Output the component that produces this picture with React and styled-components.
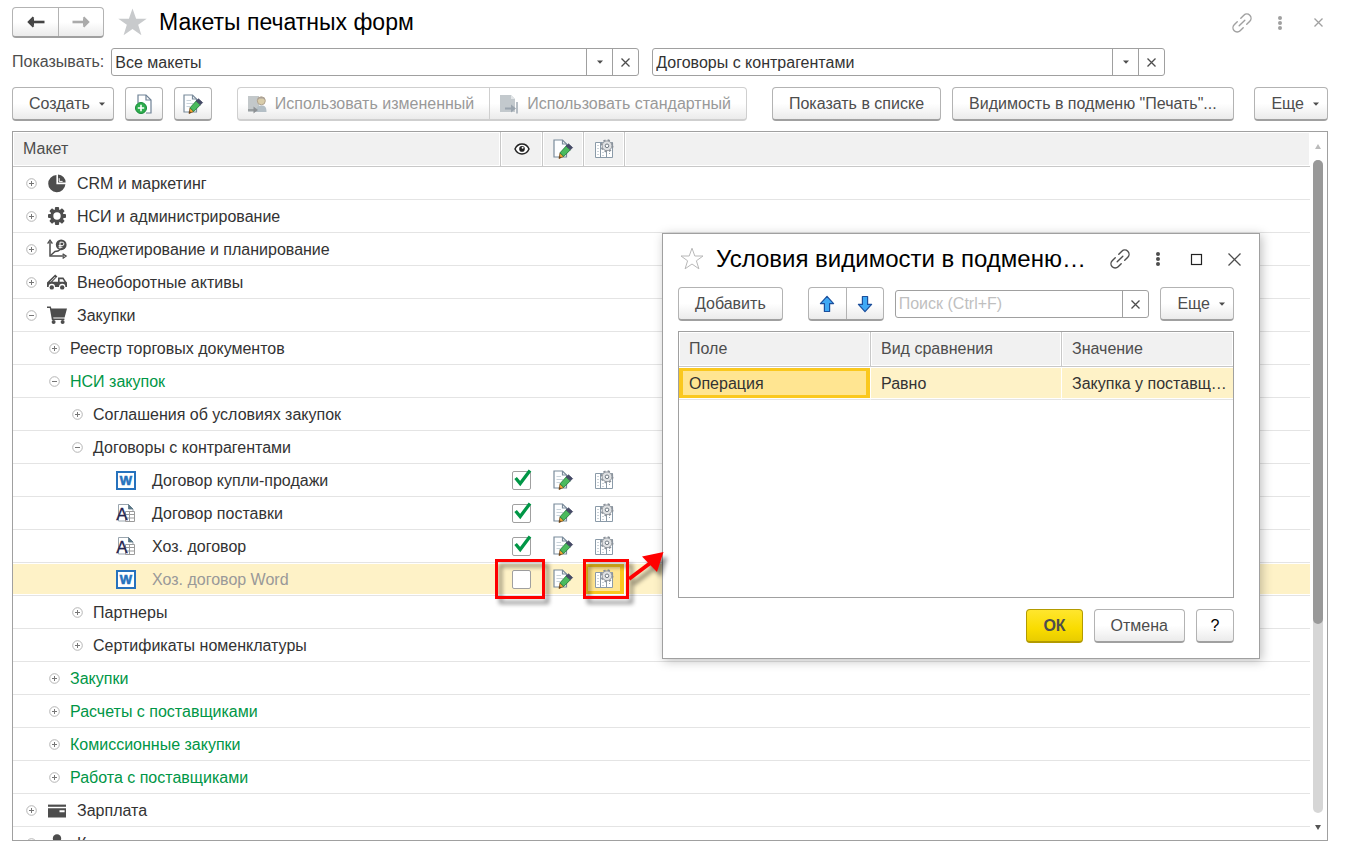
import React, { useState } from 'react';
import styled, { createGlobalStyle, css } from 'styled-components';

const colors = {
  text: '#333',
  muted: '#4d4d4d',
  disabled: '#999',
  border: '#a0a0a0',
  line: '#e4e4e4',
  header: '#f1f1f1',
  selected: '#fef2c7',
  current: '#ffe591',
  currentBorder: '#fac81e',
  green: '#009646',
  mark: '#ff0000',
};

const rows = [
  { id: 1, level: 0, toggle: '+', icon: 'pie', text: 'CRM и маркетинг' },
  { id: 2, level: 0, toggle: '+', icon: 'gear', text: 'НСИ и администрирование' },
  { id: 3, level: 0, toggle: '+', icon: 'budget', text: 'Бюджетирование и планирование' },
  { id: 4, level: 0, toggle: '+', icon: 'truck', text: 'Внеоборотные активы' },
  { id: 5, level: 0, toggle: '-', icon: 'cart', text: 'Закупки' },
  { id: 6, level: 1, toggle: '+', text: 'Реестр торговых документов' },
  { id: 7, level: 1, toggle: '-', text: 'НСИ закупок', green: true },
  { id: 8, level: 2, toggle: '+', text: 'Соглашения об условиях закупок' },
  { id: 9, level: 2, toggle: '-', text: 'Договоры с контрагентами' },
  { id: 10, level: 3, leaf: true, icon: 'word', text: 'Договор купли-продажи', visible: true },
  { id: 11, level: 3, leaf: true, icon: 'layout', text: 'Договор поставки', visible: true },
  { id: 12, level: 3, leaf: true, icon: 'layout', text: 'Хоз. договор', visible: true },
  { id: 13, level: 3, leaf: true, icon: 'word', text: 'Хоз. договор Word', visible: false, selected: true },
  { id: 14, level: 2, toggle: '+', text: 'Партнеры' },
  { id: 15, level: 2, toggle: '+', text: 'Сертификаты номенклатуры' },
  { id: 16, level: 1, toggle: '+', text: 'Закупки', green: true },
  { id: 17, level: 1, toggle: '+', text: 'Расчеты с поставщиками', green: true },
  { id: 18, level: 1, toggle: '+', text: 'Комиссионные закупки', green: true },
  { id: 19, level: 1, toggle: '+', text: 'Работа с поставщиками', green: true },
  { id: 20, level: 0, toggle: '+', icon: 'wallet', text: 'Зарплата' },
  { id: 21, level: 0, toggle: '+', icon: 'person', text: 'Кадры' },
];

// Icons

const ArrowIcon = ({ right, color }) => (
  <svg width="18" height="12" viewBox="0 0 18 12" fill="none" stroke={color}>
    <g transform={right ? 'translate(18 0) scale(-1 1)' : undefined}>
      <path d="M2 6H17.5" strokeWidth="2.6" />
      <path d="M6.5 1.2L1.8 6L6.5 10.8" strokeWidth="2.2" />
      <path d="M6.5 3V9L3 6Z" fill={color} />
    </g>
  </svg>
);

const StarIcon = ({ size, fill, stroke }) => (
  <svg width={size} height={size} viewBox="0 0 24 24">
    <path
      d="M12 1.2L14.8 9H23L16.4 13.8L18.9 21.8L12 17L5.1 21.8L7.6 13.8L1 9H9.2Z"
      fill={fill}
      stroke={stroke}
      strokeWidth="1"
    />
  </svg>
);

const LinkIcon = () => (
  <svg width="20" height="20" viewBox="0 0 20 20" fill="none" stroke="currentColor" strokeWidth="1.4" strokeLinecap="round">
    <g transform="rotate(-45 10 10)">
      <path d="M7.5 14.2H3.2A4.2 4.2 0 0 1 3.2 5.8H7.5" />
      <path d="M12.5 5.8H16.8A4.2 4.2 0 0 1 16.8 14.2H12.5" />
      <path d="M6 10H14" />
    </g>
  </svg>
);

const DotsIcon = () => (
  <svg width="6" height="16" viewBox="0 0 6 16" fill="currentColor">
    <circle cx="3" cy="3" r="2" />
    <circle cx="3" cy="8" r="2" />
    <circle cx="3" cy="13" r="2" />
  </svg>
);

const CrossIcon = ({ size = 9, weight = 1.3 }) => (
  <svg width={size} height={size} viewBox={`0 0 ${size} ${size}`} stroke="currentColor" strokeWidth={weight}>
    <path d={`M0.5 0.5L${size - 0.5} ${size - 0.5}M${size - 0.5} 0.5L0.5 ${size - 0.5}`} />
  </svg>
);

const SquareIcon = () => (
  <svg width="11" height="11" viewBox="0 0 11 11" fill="none" stroke="#222">
    <rect x="0.5" y="0.5" width="10" height="10" strokeWidth="1.2" />
  </svg>
);

const CaretIcon = ({ size = 6 }) => (
  <svg width={size} height="4" viewBox="0 0 6 4" preserveAspectRatio="none">
    <path d="M0 0.5H6L3 3.8Z" fill={colors.muted} />
  </svg>
);

const BigArrowIcon = ({ down }) => (
  <svg width="16" height="18" viewBox="0 0 16 18">
    <path
      transform={down ? 'rotate(180 8 9)' : undefined}
      d="M8 1.3L14.6 8.6H10.6V16.5H5.4V8.6H1.4Z"
      fill="#3fa9f5"
      stroke="#1c4f9c"
      strokeWidth="1.2"
      strokeLinejoin="round"
    />
  </svg>
);

const AddPageIcon = () => (
  <svg width="20" height="20" viewBox="0 0 20 20">
    <path d="M4 9V1H12L17 6V19H12" fill="#fff" stroke="#6f8296" strokeWidth="1.2" />
    <path d="M12 1V6H17" fill="none" stroke="#6f8296" strokeWidth="1.2" />
    <circle cx="7" cy="14" r="5.5" fill="#2fae4e" stroke="#178a3a" />
    <path d="M7 10.8V17.2M3.8 14H10.2" stroke="#fff" strokeWidth="1.6" />
  </svg>
);

const EditPageIcon = ({ lined }) => (
  <svg width="20" height="20" viewBox="0 0 20 20">
    <path d="M1 1H9.5L13.5 5V18H1Z" fill="#fdfeff" stroke="#7a8b9b" strokeWidth="1.2" />
    <path d="M9.5 1V5H13.5" fill="none" stroke="#7a8b9b" strokeWidth="1.2" />
    {lined && <path d="M3.5 6.5H8M3.5 9.5H10M3.5 12.5H7" stroke="#c9d3da" strokeWidth="1" />}
    <path d="M6 19.5L7 13.8L10.8 17.4Z" fill="#f0a733" stroke="#7d5426" strokeWidth="0.8" />
    <path d="M6 19.5L6.5 17L8.2 18.6Z" fill="#5a3a1a" />
    <path d="M7 13.8L13.2 7L17.4 10.8L10.8 17.4Z" fill="#4bbb5d" stroke="#247a3c" strokeWidth="0.9" />
    <path d="M13.2 7L15.4 4.8L19.6 8.6L17.4 10.8Z" fill="#454a66" stroke="#454a66" strokeWidth="0.8" />
  </svg>
);

const TableGearIcon = () => (
  <svg width="20" height="20" viewBox="0 0 20 20">
    <path d="M1.5 3.5H18.5V18.5H1.5Z" fill="#fff" stroke="#8a9aa8" />
    <path d="M6.5 3.5V18.5M12.5 8V18.5" stroke="#8a9aa8" />
    <path d="M4 6V17M9 10V17M15.5 11V17" stroke="#9aa8b4" strokeDasharray="1 2" />
    <circle cx="13" cy="6.8" r="5.6" fill="none" stroke="#8a9199" strokeWidth="1.8" strokeDasharray="2.2 2.2" />
    <circle cx="13" cy="6.8" r="4.9" fill="#dfe1e3" stroke="#8a9199" strokeWidth="0.9" />
    <circle cx="13" cy="6.8" r="1.8" fill="#fff" stroke="#6f7982" />
  </svg>
);

const EyeIcon = () => (
  <svg width="16" height="12" viewBox="0 0 16 12">
    <path d="M1 6C2.5 2.6 5 1 8 1S13.5 2.6 15 6C13.5 9.4 11 11 8 11S2.5 9.4 1 6Z" fill="#fff" stroke="#222" strokeWidth="1.5" />
    <circle cx="8" cy="5.9" r="2.8" fill="#222" />
    <circle cx="8.6" cy="4.8" r="1" fill="#fff" />
  </svg>
);

const UseChangedIcon = () => (
  <svg width="20" height="20" viewBox="0 0 20 20">
    <path d="M1 2H12V18H1Z" fill="#c3c8ca" />
    <path d="M9 18C9 13 11 11.5 14.5 11.5S19.5 13 19.5 18Z" fill="#b4bfc6" />
    <circle cx="14.3" cy="6.8" r="4" fill="#d9cdaa" stroke="#b2a48f" />
    <path d="M10.3 6C10.5 2 18 2 18.3 6L16 4.5H12.5Z" fill="#a9a09a" />
    <path d="M1 15.2H6.5V12.5L11 16L6.5 19.5V16.8H1Z" fill="#8d9194" />
  </svg>
);

const UseStandardIcon = () => (
  <svg width="20" height="20" viewBox="0 0 20 20">
    <path d="M1 1H12L16 5V18H1Z" fill="#c3c9cd" />
    <path d="M12 1V5H16Z" fill="#e2e5e7" />
    <path d="M6 13.6H12V10.5L17 14.5L12 18.5V15.4H6Z" fill="#9aa4ae" />
    <path d="M18 8V19.5" stroke="#9aa4ae" strokeWidth="1.4" />
  </svg>
);

const ToggleIcon = ({ plus }) => (
  <svg width="11" height="11" viewBox="0 0 11 11" fill="none">
    <circle cx="5.5" cy="5.5" r="4.8" stroke="#b5b5b5" />
    <path d={plus ? 'M3 5.5H8M5.5 3V8' : 'M3 5.5H8'} stroke="#777" />
  </svg>
);

const CheckIcon = () => (
  <svg width="19" height="19" viewBox="0 0 19 19" fill="none">
    <path d="M3.6 7L8.2 12.6L18 -0.6" stroke={colors.green} strokeWidth="3.3" />
  </svg>
);

const GearIcon = () => (
  <svg width="20" height="20" viewBox="0 0 20 20">
    <g fill={colors.muted}>
      {[0, 45, 90, 135].map(angle => (
        <rect key={angle} x="7.9" y="1" width="4.2" height="18" rx="1" transform={`rotate(${angle} 10 10)`} />
      ))}
      <circle cx="10" cy="10" r="6.8" />
    </g>
    <circle cx="10" cy="10" r="3.7" fill="#fff" />
  </svg>
);

const treeIcons = {
  pie: (
    <svg width="20" height="20" viewBox="0 0 20 20" fill={colors.muted}>
      <path d="M9.4 2A8.6 8.6 0 1 0 18.4 11.2H9.4Z" />
      <path d="M11 1.4A8 8 0 0 1 18.6 9.6H11Z" />
      <path d="M12.2 5.2V8.4H15.6" fill="none" stroke="#fff" strokeWidth="1" />
    </svg>
  ),
  gear: <GearIcon />,
  budget: (
    <svg width="20" height="20" viewBox="0 0 20 20" fill="none" stroke={colors.muted}>
      <path d="M3 3V17H17" strokeWidth="1.5" />
      <path d="M0.6 4.6L3 1.2L5.4 4.6M15.6 14.8L19 17L15.6 19.4" strokeWidth="1.4" />
      <path d="M3.5 16.5L8 12.5L11 12L14 10" strokeWidth="1.4" />
      <circle cx="14.2" cy="5.8" r="5.4" fill={colors.muted} stroke="none" />
      <path d="M13 9.5V3.2H15.2A1.7 1.7 0 0 1 15.2 6.6H11.6M11.6 8.2H15.4" stroke="#fff" strokeWidth="1" />
    </svg>
  ),
  truck: (
    <svg width="20" height="20" viewBox="0 0 20 20" fill={colors.muted}>
      <path d="M0 10.4L8.2 2.4L10.4 4.4L5.4 9.8H11V5.6H16.4L19 9.4L20 10.6V15H0Z" />
      <path d="M12.6 7.2H15.6L17.4 9.8H12.6Z" fill="#fff" />
      <path d="M3.4 9.8L8.2 5" stroke="#fff" strokeWidth="0.8" />
      <circle cx="4.8" cy="15" r="3.2" fill="#fff" />
      <circle cx="15.2" cy="15" r="3.2" fill="#fff" />
      <circle cx="4.8" cy="15.4" r="2.2" />
      <circle cx="15.2" cy="15.4" r="2.2" />
    </svg>
  ),
  cart: (
    <svg width="20" height="20" viewBox="0 0 20 20" fill={colors.muted}>
      <path d="M0 1.5H3.8L4.4 3.6H20L17.6 12.6H6.2L6.4 13.6H17.4V15H4.9L2.8 3.1H0Z" />
      <circle cx="6.6" cy="17" r="2" />
      <circle cx="15.6" cy="17" r="2" />
    </svg>
  ),
  wallet: (
    <svg width="20" height="20" viewBox="0 0 20 20" fill={colors.muted}>
      <path d="M1 4.6H19V6.8H1Z" />
      <path d="M1 8.2H19V10.2H12.5V12.2H19V17.6H1Z" />
      <path d="M17.6 10H19V13H17.6Z" />
    </svg>
  ),
  person: (
    <svg width="20" height="20" viewBox="0 0 20 20" fill={colors.muted}>
      <circle cx="10" cy="5.4" r="4.2" />
      <path d="M2 18C2 12.5 6 10.6 10 10.6S18 12.5 18 18Z" />
    </svg>
  ),
  word: (
    <svg width="20" height="19" viewBox="0 0 20 19">
      <rect x="1" y="1" width="18" height="17" fill="#fff" stroke="#2672bd" strokeWidth="2" />
      <text x="10" y="14" textAnchor="middle" fontFamily="Liberation Sans, sans-serif" fontWeight="bold" fontSize="13" fill="#2672bd" stroke="#2672bd" strokeWidth="0.6">
        W
      </text>
    </svg>
  ),
  layout: (
    <svg width="20" height="20" viewBox="0 0 20 20">
      <path d="M2.5 1.5H12.5L17 6V18H2.5Z" fill="#fff" stroke="#9aa5ae" />
      <path d="M12.5 1.5V6H17Z" fill="#5c7787" stroke="#5c7787" strokeWidth="0.8" />
      <path d="M9.5 8.5H18.5V18.5H9.5ZM9.5 11.5H18.5M9.5 15H18.5M13.5 8.5V18.5" fill="#fff" stroke="#9b9b9b" />
      <text x="6" y="17" textAnchor="middle" fontFamily="Liberation Sans, sans-serif" fontSize="17" fill="#262650" stroke="#262650" strokeWidth="0.3">
        A
      </text>
    </svg>
  ),
};

const CalloutArrow = () => (
  <svg width="48" height="48" viewBox="0 0 48 48">
    <path d="M4 31L26 14.5" stroke={colors.mark} strokeWidth="4" />
    <path d="M38.5 4L17 8.5L32 24Z" fill={colors.mark} />
  </svg>
);

const Combo = ({ label, name, width, options }) => (
  <ComboBox $width={width}>
    <Select aria-label={label} id={name} name={name}>
      {options.map(option => <option key={option}>{option}</option>)}
    </Select>
    <ComboCaret><CaretIcon /></ComboCaret>
    <ClearButton type="button" aria-label="Очистить"><CrossIcon /></ClearButton>
  </ComboBox>
);

const ConditionsDialog = () => (
  <Dialog role="dialog" aria-labelledby="conditions-title">
    <DialogHeader>
      <StarIcon size={24} fill="#fff" stroke="#b8b8b8" />
      <DialogTitle id="conditions-title">Условия видимости в подменю…</DialogTitle>
      <WindowButtons $dark>
        <IconButton type="button" aria-label="Ссылка"><LinkIcon /></IconButton>
        <IconButton type="button" aria-label="Меню"><DotsIcon /></IconButton>
        <IconButton type="button" aria-label="Развернуть"><SquareIcon /></IconButton>
        <IconButton type="button" aria-label="Закрыть"><CrossIcon size={13} /></IconButton>
      </WindowButtons>
    </DialogHeader>
    <DialogBody>
      <DialogToolbar>
        <Button type="button">Добавить</Button>
        <ButtonGroup $start={14}>
          <GroupButton type="button" $square aria-label="Вверх"><BigArrowIcon /></GroupButton>
          <GroupButton type="button" $square aria-label="Вниз"><BigArrowIcon down /></GroupButton>
        </ButtonGroup>
        <SearchBox>
          <SearchInput type="text" aria-label="Поиск" placeholder="Поиск (Ctrl+F)" />
          <ClearButton type="button" aria-label="Очистить"><CrossIcon /></ClearButton>
        </SearchBox>
        <Button type="button" $menu>Еще <CaretIcon /></Button>
      </DialogToolbar>
      <ConditionsFrame>
        <Table>
          <colgroup>
            <Col $width={192} />
            <Col $width={191} />
            <Col />
          </colgroup>
          <thead>
            <tr>
              <HeadCell>Поле</HeadCell>
              <HeadCell>Вид сравнения</HeadCell>
              <HeadCell $last>Значение</HeadCell>
            </tr>
          </thead>
          <tbody>
            <Row $selected>
              <CurrentCell>Операция</CurrentCell>
              <Cell $split>Равно</Cell>
              <Cell>Закупка у поставщ…</Cell>
            </Row>
          </tbody>
        </Table>
      </ConditionsFrame>
      <DialogFooter>
        <PrimaryButton type="button">ОК</PrimaryButton>
        <Button type="button">Отмена</Button>
        <Button type="button" $square $black>?</Button>
      </DialogFooter>
    </DialogBody>
  </Dialog>
);

export default function App() {
  const [visible, setVisible] = useState(
    Object.fromEntries(rows.filter(row => row.leaf).map(row => [row.id, row.visible]))
  );

  const toggleVisible = id => {
    setVisible({ ...visible, [id]: !visible[id] });
  };

  return (
    <Page>
      <GlobalStyle />

      <Header>
        <ButtonGroup>
          <GroupButton type="button" $nav aria-label="Назад"><ArrowIcon color="#444" /></GroupButton>
          <GroupButton type="button" $nav aria-label="Вперед"><ArrowIcon right color="#aaa" /></GroupButton>
        </ButtonGroup>
        <StarIcon size={31} fill="#c8cacc" stroke="none" />
        <Title>Макеты печатных форм</Title>
        <WindowButtons>
          <IconButton type="button" aria-label="Ссылка"><LinkIcon /></IconButton>
          <IconButton type="button" aria-label="Меню"><DotsIcon /></IconButton>
          <IconButton type="button" aria-label="Закрыть"><CrossIcon /></IconButton>
        </WindowButtons>
      </Header>

      <Filters>
        <FilterLabel htmlFor="kind">Показывать:</FilterLabel>
        <Combo name="kind" label="Показывать" width={528} options={['Все макеты']} />
        <Combo name="section" label="Раздел" width={513} options={['Договоры с контрагентами']} />
      </Filters>

      <Toolbar>
        <Button type="button" $menu>Создать <CaretIcon /></Button>
        <Button type="button" $square aria-label="Новый макет"><AddPageIcon /></Button>
        <Button type="button" $square aria-label="Изменить макет"><EditPageIcon lined /></Button>
        <ButtonGroup $start={14} $end={14} $disabled>
          <GroupButton type="button" disabled><UseChangedIcon />Использовать измененный</GroupButton>
          <GroupButton type="button" disabled><UseStandardIcon />Использовать стандартный</GroupButton>
        </ButtonGroup>
        <Button type="button">Показать в списке</Button>
        <Button type="button">Видимость в подменю "Печать"...</Button>
        <ToolbarEnd>
          <Button type="button" $menu>Еще <CaretIcon /></Button>
        </ToolbarEnd>
      </Toolbar>

      <TreeFrame>
        <TreeArea>
          <Table>
            <colgroup>
              <Col $width={488} />
              <Col $width={42} />
              <Col $width={41} />
              <Col $width={41} />
              <Col />
            </colgroup>
            <thead>
              <tr>
                <HeadCell>Макет</HeadCell>
                <HeadCell $icon aria-label="Видимость"><EyeIcon /></HeadCell>
                <HeadCell $icon aria-label="Изменен"><EditPageIcon /></HeadCell>
                <HeadCell $icon aria-label="Условия"><TableGearIcon /></HeadCell>
                <HeadCell $last />
              </tr>
            </thead>
            <tbody>
              {rows.map(row => (
                <Row key={row.id} $selected={row.selected}>
                  <Cell $flush>
                    <TreeItem $level={row.level}>
                      <Toggle>
                        {row.toggle && (
                          <ToggleButton type="button" aria-label={row.text} aria-expanded={row.toggle === '-'}>
                            <ToggleIcon plus={row.toggle === '+'} />
                          </ToggleButton>
                        )}
                      </Toggle>
                      {row.icon && <TreeIcon $leaf={row.leaf}>{treeIcons[row.icon]}</TreeIcon>}
                      <TreeText $green={row.green} $dim={row.selected}>{row.text}</TreeText>
                    </TreeItem>
                  </Cell>
                  <Cell $icon>
                    {row.leaf && (
                      <CheckLabel>
                        <Checkbox
                          type="checkbox"
                          aria-label={row.text}
                          checked={visible[row.id]}
                          onChange={() => toggleVisible(row.id)}
                        />
                        {visible[row.id] && <CheckMark><CheckIcon /></CheckMark>}
                      </CheckLabel>
                    )}
                  </Cell>
                  <Cell $icon>{row.leaf && <EditPageIcon lined />}</Cell>
                  {row.selected
                    ? <CurrentCell $icon><TableGearIcon /></CurrentCell>
                    : <Cell $icon>{row.leaf && <TableGearIcon />}</Cell>}
                  <Cell />
                </Row>
              ))}
            </tbody>
          </Table>
        </TreeArea>
        <Scrollbar>
          <ScrollArrow $up />
          <ScrollTrack><ScrollThumb /></ScrollTrack>
          <ScrollArrow />
        </Scrollbar>
      </TreeFrame>

      <ConditionsDialog />
      <Callout $left={495} $width={50} />
      <Callout $left={583} $width={46} />
      <CalloutPointer><CalloutArrow /></CalloutPointer>
    </Page>
  );
}

// Styles

const GlobalStyle = createGlobalStyle`
  * {
    box-sizing: border-box;
  }

  body {
    margin: 0;
    background: #fff;
  }

  body, button, input, select {
    font-family: "Liberation Sans", Arial, sans-serif;
    font-size: 16px;
    color: ${colors.text};
  }

  svg {
    display: block;
    flex: none;
    overflow: visible;
  }
`;

const Page = styled.div`
  position: relative;
  display: flex;
  flex-direction: column;
  height: 100vh;
  padding: 7px 22px 13px 12px;
`;

const Header = styled.header`
  display: flex;
  align-items: center;
  margin-bottom: 10px;

  > svg {
    margin: 0 11px 0 13px;
  }
`;

const Title = styled.h1`
  flex: 1;
  margin: 0;
  padding-bottom: 2px;
  font-size: 23px;
  line-height: 26px;
  font-weight: normal;
  color: #000;
`;

const WindowButtons = styled.div`
  display: flex;
  gap: 18px;
  color: ${props => props.$dark ? colors.muted : colors.border};
`;

const IconButton = styled.button`
  display: flex;
  align-items: center;
  justify-content: center;
  width: 20px;
  height: 20px;
  padding: 0;
  border: 0;
  background: none;
  color: inherit;
`;

const Filters = styled.div`
  display: flex;
  align-items: center;
  gap: 13px;
  margin-bottom: 11px;
`;

const FilterLabel = styled.label`
  margin-right: -6px;
  color: ${colors.muted};
`;

const ComboBox = styled.div`
  display: grid;
  grid-template-columns: 1fr 26px 26px;
  flex: 0 1 ${props => props.$width}px;
  height: 28px;
  border: 1px solid ${colors.border};
  border-radius: 3px;
`;

const Select = styled.select`
  grid-area: 1 / 1 / 2 / 3;
  min-width: 0;
  padding: 0 3px;
  border: 0;
  background: none;
  appearance: none;
`;

const ComboCaret = styled.span`
  grid-area: 1 / 2 / 2 / 3;
  display: flex;
  align-items: center;
  justify-content: center;
  border-left: 1px solid ${colors.border};
  pointer-events: none;
`;

const ClearButton = styled.button`
  display: flex;
  align-items: center;
  justify-content: center;
  width: 26px;
  padding: 0;
  border: 0;
  border-left: 1px solid ${colors.border};
  background: none;
  color: ${colors.muted};
`;

const Toolbar = styled.div`
  display: flex;
  gap: 11px;
  margin-bottom: 10px;
`;

const ToolbarEnd = styled.div`
  margin-left: auto;
`;

const buttonFace = css`
  flex: none;
  border: 1px solid #b3b3b3;
  border-bottom: 2px solid ${colors.border};
  border-radius: 4px;
  background: linear-gradient(#fff 50%, #ebebeb);
`;

const Button = styled.button`
  ${buttonFace}
  display: flex;
  align-items: center;
  justify-content: center;
  gap: 9px;
  width: ${props => props.$square ? '38px' : 'auto'};
  height: 34px;
  padding: ${props => props.$square ? '0' : props.$menu ? '0 8px 0 16px' : '0 16px'};
  color: ${props => props.$black ? '#000' : colors.muted};
  white-space: nowrap;
`;

const PrimaryButton = styled(Button)`
  border-color: #b39b00;
  background: linear-gradient(#ffe62e, #f9dc00 60%, #e8cc00);
  font-weight: bold;
`;

const ButtonGroup = styled.div`
  ${buttonFace}
  display: flex;
  margin: 0 ${props => props.$end || 0}px 0 ${props => props.$start || 0}px;
  ${props => props.$disabled && css`
    border-color: #cfcfcf;
  `}
`;

const GroupButton = styled.button`
  display: flex;
  align-items: center;
  justify-content: center;
  gap: 8px;
  width: ${props => props.$nav ? '45px' : props.$square ? '37px' : 'auto'};
  height: ${props => props.$nav ? '28px' : '31px'};
  padding: ${props => props.$nav || props.$square ? '0' : '0 15px 0 9px'};
  border: 0;
  background: none;
  white-space: nowrap;

  &:not(:first-child) {
    border-left: 1px solid ${props => props.disabled ? '#cfcfcf' : '#b3b3b3'};
  }

  &:disabled {
    color: ${colors.disabled};
  }
`;

const TreeFrame = styled.div`
  display: flex;
  flex: 1;
  min-height: 0;
  border: 1px solid ${colors.border};
`;

const TreeArea = styled.div`
  flex: 1;
  overflow: hidden;
`;

const Table = styled.table`
  width: 100%;
  table-layout: fixed;
  border-collapse: separate;
  border-spacing: 0;
`;

const Col = styled.col`
  width: ${props => props.$width ? `${props.$width}px` : 'auto'};
`;

const HeadCell = styled.th`
  height: 35px;
  padding: ${props => props.$icon ? '0' : '0 10px'};
  border-right: ${props => props.$last ? '0' : '1px solid #c8c8c8'};
  border-bottom: 1px solid #c8c8c8;
  background: ${colors.header};
  box-shadow: inset 0 0 0 1px #fff;
  color: ${colors.muted};
  font-weight: normal;
  text-align: left;

  svg {
    margin: 0 auto;
  }
`;

const Cell = styled.td`
  height: 33px;
  padding: ${props => props.$icon ? '0 2px 0 0' : props.$flush ? '0' : '2px 4px 0 10px'};
  border-bottom: 1px solid ${colors.line};
  white-space: nowrap;

  ${props => props.$split && css`
    border-right: 1px solid #fff;
  `}

  > svg {
    margin: 0 auto;
  }
`;

const Row = styled.tr`
  ${props => props.$selected && css`
    > td {
      background: ${colors.selected};
      box-shadow: inset 0 1px #fff, inset 0 -1px #fff;
    }
  `}
`;

const CurrentCell = styled(Cell)`
  tr > && {
    padding-right: 1px;
    border-right: 1px solid #fff;
    background: ${colors.current};
    box-shadow: inset 0 1px #fff, inset 0 -1px #fff, inset 0 0 0 4px ${colors.currentBorder};
  }
`;

const TreeItem = styled.div`
  display: flex;
  align-items: center;
  gap: 10px;
  padding-left: ${props => 13 + props.$level * 23}px;
`;

const Toggle = styled.span`
  width: 11px;
`;

const ToggleButton = styled.button`
  display: block;
  padding: 0;
  border: 0;
  background: none;
`;

const TreeIcon = styled.span`
  width: 20px;
  margin-right: ${props => props.$leaf ? '6px' : '0'};
`;

const TreeText = styled.span`
  padding-top: 2px;
  color: ${props => props.$green ? colors.green : props.$dim ? colors.disabled : colors.text};
`;

const CheckLabel = styled.label`
  display: grid;
  justify-content: center;
`;

const Checkbox = styled.input`
  grid-area: 1 / 1;
  width: 19px;
  height: 19px;
  margin: 0;
  border: 1px solid ${colors.border};
  border-radius: 2px;
  background: #fff;
  appearance: none;
`;

const CheckMark = styled.span`
  grid-area: 1 / 1;
  z-index: 1;
`;

const Scrollbar = styled.div`
  display: flex;
  flex-direction: column;
  align-items: center;
  width: 17px;
  padding: 12px 1px 10px 0;
`;

const ScrollArrow = styled.span`
  width: 0;
  border: 3px solid transparent;
  ${props => props.$up
    ? css`border-top: 0; border-bottom: 5px solid #bbb;`
    : css`border-bottom: 0; border-top: 5px solid #555;`}
`;

const ScrollTrack = styled.div`
  flex: 1;
  width: 10px;
  margin: 11px 0 12px;
  border-radius: 5px;
  background: #d6d6d6;
`;

const ScrollThumb = styled.div`
  height: 71%;
  border-radius: 5px;
  background: #999;
`;

const Dialog = styled.section`
  position: absolute;
  top: 233px;
  left: 662px;
  width: 598px;
  border: 1px solid ${colors.border};
  background: #fff;
  box-shadow: 2px 2px 10px rgba(0, 0, 0, 0.25);
`;

const DialogHeader = styled.div`
  display: flex;
  align-items: center;
  gap: 12px;
  height: 50px;
  padding: 0 15px 0 17px;
`;

const DialogTitle = styled.h2`
  flex: 1;
  margin: 0;
  font-size: 24px;
  line-height: 28px;
  font-weight: normal;
  color: #000;
  white-space: nowrap;
`;

const DialogBody = styled.div`
  padding: 3px 25px 15px 15px;
`;

const DialogToolbar = styled(Toolbar)`
  align-items: center;
`;

const SearchBox = styled.div`
  display: flex;
  flex: 1;
  height: 28px;
  border: 1px solid ${colors.border};
  border-radius: 3px;
`;

const SearchInput = styled.input`
  flex: 1;
  min-width: 0;
  padding: 0 3px;
  border: 0;
  background: none;

  &::placeholder {
    color: #bfbfbf;
  }
`;

const ConditionsFrame = styled.div`
  height: 267px;
  border: 1px solid ${colors.border};
`;

const DialogFooter = styled.div`
  display: flex;
  justify-content: flex-end;
  gap: 11px;
  margin-top: 11px;
`;

const Callout = styled.div`
  position: absolute;
  top: 559px;
  left: ${props => props.$left}px;
  width: ${props => props.$width}px;
  height: 40px;
  border: 3px solid ${colors.mark};
  filter: drop-shadow(4px 5px 2px rgba(0, 0, 0, 0.45));
  pointer-events: none;
`;

const CalloutPointer = styled.div`
  position: absolute;
  top: 548px;
  left: 625px;
  filter: drop-shadow(4px 5px 2px rgba(0, 0, 0, 0.45));
  pointer-events: none;
`;
